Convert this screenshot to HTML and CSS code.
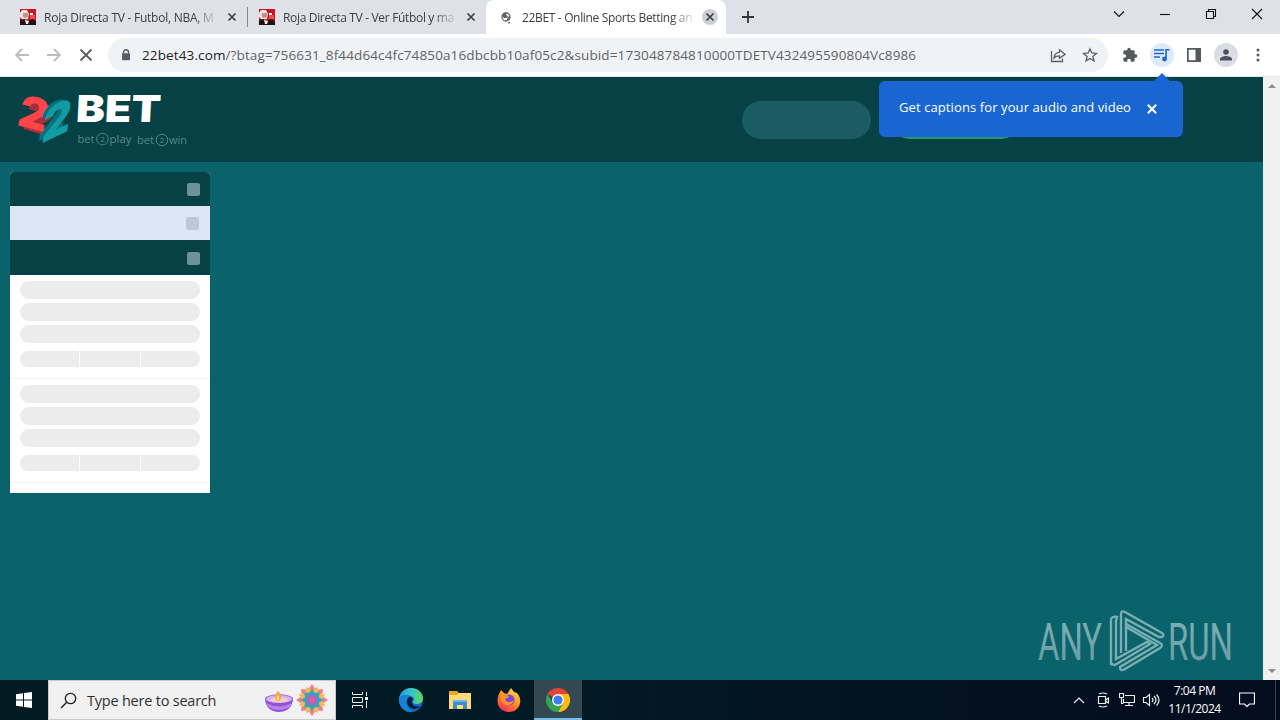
FILE: index.html
```html
<!DOCTYPE html>
<html lang="en">
<head>
    <meta charset="UTF-8">
    <meta name="viewport" content="width=device-width, initial-scale=1.0">
    <title>22BET - Online Sports Betting</title>
    <link rel="stylesheet" href="styles.css">
</head>
<body>
    <svg class="defs" width="0" height="0">
        <symbol id="roja" viewBox="0 0 16 16">
            <path fill="#c91522" d="M0 0h16v16H0z"/>
            <path fill="#eee5e1" d="M0 4l2-3h5l2 4-1 5-5 1-3-3z"/>
            <path fill="#c99083" d="M3 4h5v4l-3 1-2-1z"/>
            <path fill="#211014" d="M0 11l4-1 4 2 4-2 4 2v4H0z"/>
            <path fill="#eee" d="M5 11l4 1-1 3H6zM10 4h3v2h-3z"/>
            <path fill="#f04b4d" d="M10 6h5v4h-5z"/>
        </symbol>
        <symbol id="close" viewBox="0 0 10 10">
            <path d="M1.500 1.500l7 7M8.500 1.500l-7 7" fill="none" stroke="currentColor" stroke-width="1.7"/>
        </symbol>
    </svg>

    <!-- tabs -->
    <div class="tabs">
        <div class="tab">
            <svg class="favicon" width="16" height="16"><use href="#roja"/></svg>
            <span class="tab-title t1">Roja Directa TV - Futbol, NBA, M</span>
            <span class="tab-close"><svg width="10" height="10"><use href="#close"/></svg></span>
        </div>
        <div class="tab">
            <svg class="favicon" width="16" height="16"><use href="#roja"/></svg>
            <span class="tab-title t2">Roja Directa TV - Ver Fútbol y ma</span>
            <span class="tab-close"><svg width="10" height="10"><use href="#close"/></svg></span>
        </div>
        <div class="tab active">
            <svg class="favicon" width="16" height="16" viewBox="0 0 16 16">
                <circle cx="7" cy="8" r="4" fill="#fff" stroke="#5f6368" stroke-width="1.3"/>
                <path fill="#5f6368" d="M3 7c0-3 3-4 5-3L7 6l2 1-1 2H5zM9 8l2-1c0 3-1 4-3 5V10z"/>
                <path fill="#3f76cf" d="M9 13h2v1.6H9z"/>
            </svg>
            <span class="tab-title t3">22BET - Online Sports Betting an</span>
            <span class="tab-close"><svg width="10" height="10"><use href="#close"/></svg></span>
        </div>
        <svg class="new-tab" width="12" height="12"><path d="M6 0v12M0 6h12" stroke="#30343a" stroke-width="1.8"/></svg>
        <div class="window-buttons">
            <svg width="12" height="12" viewBox="0 0 12 12"><path d="M1 3.5l5 5 5-5"/></svg>
            <svg width="12" height="12" viewBox="0 0 12 12"><path d="M1 6.5h10"/></svg>
            <svg width="12" height="12" viewBox="0 0 12 12"><path d="M1.5 3.5h7v7h-7zM3.5 3.500v-2h7v7h-2"/></svg>
            <svg width="12" height="12" viewBox="0 0 12 12"><path d="M1 1l10 10M11 1L1 11"/></svg>
        </div>
    </div>

    <!-- toolbar -->
    <div class="toolbar">
        <div class="nav">
            <svg width="14" height="14" viewBox="0 0 14 14" class="off"><path d="M14 7H1.500M7 1L1 7l6 6"/></svg>
            <svg width="14" height="14" viewBox="0 0 14 14" class="off"><path d="M0 7h12.500M7 1l6 6-6 6"/></svg>
            <svg width="14" height="14" viewBox="0 0 14 14"><path d="M1.500 1.500l11 11M12.500 1.500l-11 11"/></svg>
        </div>
        <div class="address">
            <svg width="10" height="12" viewBox="0 0 10 12"><path d="M2.500 5V3.300a2.500 2.500 0 0 1 5 0V5" fill="none" stroke="#5b5f64" stroke-width="1.400"/><rect x="1" y="4.300" width="8" height="7" rx="1" fill="#5b5f64"/></svg>
            <span class="url"><b>22bet43.com</b>/?btag=756631_8f44d64c4fc74850a16dbcbb10af05c2&amp;subid=173048784810000TDETV432495590804Vc8986</span>
            <svg class="share" width="16" height="16" viewBox="0 0 16 16"><path d="M1.500 4v10.500h11v-3M4 11c.4-4 2.500-5.500 5.500-5.600V2.800L15 7.300l-5.500 4V8.800C7 8.800 5.300 9.500 4 11z"/></svg>
            <svg class="star" width="16" height="16" viewBox="0 0 16 16"><path d="M8 1.800l1.800 4.200 4.600.4-3.500 3 1.100 4.500L8 11.500l-4 2.400 1.100-4.500-3.500-3 4.600-.4z"/></svg>
        </div>
        <div class="actions">
            <svg width="16" height="16" viewBox="0 0 24 24"><path fill="#55595e" d="M20.500 11H19V7a2 2 0 0 0-2-2h-4V3.500a2.500 2.500 0 0 0-5 0V5H4a2 2 0 0 0-2 2v3.800h1.500a2.700 2.700 0 0 1 0 5.400H2V20c0 1.100.9 2 2 2h3.800v-1.500a2.700 2.700 0 0 1 5.400 0V22H17a2 2 0 0 0 2-2v-4h1.500a2.500 2.500 0 0 0 0-5z"/></svg>
            <span class="round media"><svg width="16" height="14" viewBox="0 0 16 14"><path d="M0 2h10M0 5.500h10M0 9h6M12 11V1.800h3.500" fill="none" stroke="#1b6ad6" stroke-width="1.600"/><circle cx="10.500" cy="11" r="2.400" fill="#1b6ad6"/></svg></span>
            <svg width="14" height="14" viewBox="0 0 14 14"><path fill="#55595e" fill-rule="evenodd" d="M0 0h14v14H0zM1.700 1.700v10.600h6.800V1.700z"/></svg>
            <span class="round user"><svg width="14" height="14" viewBox="0 0 14 14"><circle cx="7" cy="4" r="2.800" fill="#4b5065"/><path d="M1 12.500V11c0-2 4-3 6-3s6 1 6 3v1.500z" fill="#4b5065"/></svg></span>
            <svg width="4" height="14" viewBox="0 0 4 14"><circle cx="2" cy="2" r="1.500"/><circle cx="2" cy="7" r="1.500"/><circle cx="2" cy="12" r="1.500"/></svg>
        </div>
    </div>

    <!-- page -->
    <div class="viewport">
        <div class="site">
            <header class="header">
                <svg class="logo" width="180" height="60" viewBox="14 90 180 60">
                    <g class="logo-digit">
                        <text class="red-side" transform="matrix(.95 .3 -.27 .9 21 128)">2</text>
                        <text class="red" transform="matrix(1 .25 -.22 .97 16 125)">2</text>
                        <text class="teal-side" transform="matrix(.95 -.48 -.15 1.050 37 142)">2</text>
                        <text class="teal" transform="matrix(1 -.48 -.15 1.080 40.500 144)">2</text>
                    </g>
                    <text class="logo-name" transform="translate(75.500 122) skewX(-3)" textLength="85" lengthAdjust="spacingAndGlyphs">BET</text>
                    <g class="slogan">
                        <text x="77.500" y="143" textLength="17" lengthAdjust="spacingAndGlyphs">bet</text>
                        <circle cx="102.500" cy="139" r="5.800"/>
                        <text class="small" x="100.300" y="142">2</text>
                        <text x="109.500" y="143" textLength="22" lengthAdjust="spacingAndGlyphs">play</text>
                        <text x="137" y="143.500" textLength="17" lengthAdjust="spacingAndGlyphs">bet</text>
                        <circle cx="162" cy="140" r="5.800"/>
                        <text class="small" x="159.800" y="143">2</text>
                        <text x="169" y="143.500" textLength="18" lengthAdjust="spacingAndGlyphs">win</text>
                    </g>
                </svg>
                <div class="pill login"></div>
                <div class="pill signup"></div>
            </header>
            <aside class="sidebar">
                <div class="bar top"><i></i></div>
                <div class="bar light"><i></i></div>
                <div class="bar last"><i></i></div>
                <div class="coupon">
                    <div class="line"></div><div class="line"></div><div class="line"></div>
                    <div class="odds"><i></i><i></i><i></i></div>
                </div>
                <div class="coupon">
                    <div class="line"></div><div class="line"></div><div class="line"></div>
                    <div class="odds"><i></i><i></i><i></i></div>
                </div>
            </aside>
        </div>
        <div class="scrollbar">
            <svg width="8" height="5"><path d="M0 5l4-4 4 4z"/></svg>
            <svg width="8" height="5"><path d="M0 0l4 4 4-4z"/></svg>
        </div>
    </div>

    <!-- captions tooltip -->
    <div class="tooltip">
        <span>Get captions for your audio and video</span>
        <svg width="12" height="12"><use href="#close"/></svg>
    </div>

    <svg class="watermark" width="196" height="64" viewBox="1037 609 196 64">
        <defs>
            <linearGradient id="fade" x1="0" y1="0" x2="0" y2="1">
                <stop offset="0" stop-color="#81b2b9"/>
                <stop offset="1" stop-color="#6599a1"/>
            </linearGradient>
        </defs>
        <text x="1038" y="659.500" textLength="64" lengthAdjust="spacingAndGlyphs">ANY</text>
        <text x="1168" y="659.500" textLength="65" lengthAdjust="spacingAndGlyphs">RUN</text>
        <g class="play">
            <path d="M1117 617q-6-1-6 3v44l4 1 35-21-3-2-31 17v-38z"/>
            <path d="M1121 653v-39q0-4 4-2l37 21q3 2 0 4h-3l-33-18v32"/>
            <path d="M1126 624l34 19q4 2 0 5l-35 21q-5 3-5-2l37-22-31-18"/>
        </g>
    </svg>

    <!-- taskbar -->
    <div class="taskbar">
        <div class="start"><svg width="16" height="16" viewBox="0 0 16 16"><path fill="#fff" d="M0 2.200l7-1v6.300H0zM8 1l8-1v7.500H8zM0 8.500h7v6.300l-7-1zM8 8.500h8V16l-8-1z"/></svg></div>
        <div class="search">
            <svg width="17" height="17" viewBox="0 0 17 17"><path d="M1 16l5.500-5.500" stroke="#222" stroke-width="1.400"/><circle cx="10.500" cy="6.500" r="5.200" fill="none" stroke="#222" stroke-width="1.300"/></svg>
            <span>Type here to search</span>
            <svg class="lamp" width="64" height="34" viewBox="264 683 64 34">
                <path d="M265 698c0 9 6 14 14 14s14-5 14-14c-6-5-22-5-28 0z" fill="#9254d0"/>
                <ellipse cx="279" cy="699" rx="13" ry="4" fill="#d5b0f2"/>
                <ellipse cx="279" cy="700" rx="9" ry="2.500" fill="#f3cec8"/>
                <path d="M266 703q13 7 26 0l-2 4q-11 6-22 0z" fill="#bb83ed"/>
                <path d="M278 691c-4 5-3 9 0 10 4-1 4-6 0-10z" fill="#f8a529"/>
                <path d="M278 695c-2 3-1 5 0 5s2-2 0-5z" fill="#ffea83"/>
                <g transform="translate(312 700)">
                    <path fill="#f27b8d" d="M0-16l4 6 7-1-1 7 6 4-6 4 1 7-7-1-4 6-4-6-7 1 1-7-6-4 6-4-1-7 7 1z"/>
                    <path fill="#f7b659" transform="rotate(22) scale(.9)" d="M0-16l4 6 7-1-1 7 6 4-6 4 1 7-7-1-4 6-4-6-7 1 1-7-6-4 6-4-1-7 7 1z"/>
                    <path fill="#31a8b8" transform="scale(.7)" d="M0-16l4 6 7-1-1 7 6 4-6 4 1 7-7-1-4 6-4-6-7 1 1-7-6-4 6-4-1-7 7 1z"/>
                    <path fill="#ae62c9" transform="rotate(22) scale(.42)" d="M0-16l4 6 7-1-1 7 6 4-6 4 1 7-7-1-4 6-4-6-7 1 1-7-6-4 6-4-1-7 7 1z"/>
                    <circle r="2.500" fill="#ed5a9a"/>
                </g>
            </svg>
        </div>
        <div class="app"><svg width="16" height="16" viewBox="0 0 16 16"><path d="M.5 0v2.500h10V0M.5 16v-2.500h10V16M.5 5.500h10v5H.5zM14.500 0v4M14.500 9v7" fill="none" stroke="#e8eef0"/><path d="M13 5h3v3h-3z" fill="#fff"/></svg></div>
        <div class="app edge"><svg width="24" height="24" viewBox="0 0 24 24">
            <defs><linearGradient id="edge"><stop stop-color="#279fe7"/><stop offset=".6" stop-color="#37c8bd"/><stop offset="1" stop-color="#66d657"/></linearGradient></defs>
            <circle cx="12" cy="12" r="12" fill="#126cc0"/>
            <path d="M0 11C1 4 6 0 12 0c7 0 12 5 12 10 0 4-3 6-6 6-4 0-5-2-3-4 1-4-9-8-15-1z" fill="url(#edge)"/>
            <path d="M10 9c-4 3-2 11 5 12 3 0 6-2 7-3-3 1-8 1-9-3-1-2 0-3 1-4-1-2-3-2-4-2z" fill="#061d38"/>
            <path d="M0 12c0-5 7-7 10-3-5 4-3 11 4 15C5 25 0 18 0 12z" fill="#1682d8"/>
        </svg></div>
        <div class="app"><svg width="22" height="20" viewBox="0 0 22 20"><path fill="#e9a728" d="M0 1h8l2 2h12v5H0z"/><path fill="#ffdb78" d="M0 5h8l2-2h12v16H0z"/><path fill="#398fce" d="M4 10h14v9h-4v-4H8v4H4z"/><path fill="#63b8e8" d="M4 10h14v2H4z"/></svg></div>
        <div class="app"><svg width="24" height="24" viewBox="0 0 24 24">
            <defs><linearGradient id="fire" x1=".8" y1="0" x2=".2" y2="1"><stop stop-color="#ffe63c"/><stop offset=".5" stop-color="#ff8c22"/><stop offset="1" stop-color="#f4245c"/></linearGradient></defs>
            <path fill="url(#fire)" d="M2 6l2-4 3 3 3 1 4-6 3 4 3 1c7 8 2 19-8 19S-2 15 2 6z"/>
            <circle cx="12" cy="12" r="5.500" fill="#7b48d6"/><path fill="#ff9325" d="M5 7c3-2 6 0 7 2l-4 2c1 4 6 4 9 1-1 5-7 7-11 3-2-2-2-5-1-8z"/>
        </svg></div>
        <div class="app current"><svg width="24" height="24" viewBox="0 0 24 24">
            <path fill="#e54335" d="M12 12L1.600 6a12 12 0 0 1 20.800 0z"/><path fill="#fbbd05" d="M12 6h10.400A12 12 0 0 1 12 24l5-9z"/><path fill="#30a552" d="M1.600 6A12 12 0 0 0 12 24l5.200-9L12 17l-5.200-2z"/>
            <circle cx="12" cy="12" r="6" fill="#fff"/><circle cx="12" cy="12" r="4.600" fill="#3b7ded"/>
        </svg></div>
        <div class="tray">
            <svg width="12" height="8" viewBox="0 0 12 8"><path d="M1 7l5-5 5 5"/></svg>
            <svg width="12" height="16" viewBox="0 0 12 16"><path d="M2 2q4-2 8 0M2 14q4 2 8 0M1.500 4.500h7v7h-7zM8.500 8l3-2v5l-3-2"/></svg>
            <svg width="16" height="14" viewBox="0 0 16 14"><path d="M6 2.500h9.500v7H4.500V6M10 9.500v3M6 12.500h8M.5.500h4v4h-4zM2.500 4.500v6h2"/></svg>
            <svg width="17" height="14" viewBox="0 0 17 14"><path d="M.5 4.500H3l3.500-3v11l-3.500-3H.5zM9 5q2 2 0 4M11 3q4 4 0 8M13.500 1.500q5 5.500 0 11"/></svg>
        </div>
        <div class="clock"><span>7:04 PM</span><span>11/1/2024</span></div>
        <svg class="notify" width="16" height="16" viewBox="0 0 16 16"><path d="M.5 1h15v11h-5L8 14.500 5.500 12h-5z" fill="none" stroke="#fff" stroke-width="1.200"/></svg>
        <div class="desktop-edge"></div>
    </div>
</body>
</html>
```
FILE: styles.css
```css
* {
    box-sizing: border-box;
}
body {
    margin: 0;
    width: 1280px;
    height: 720px;
    overflow: hidden;
    font-family: "Open Sans", "Noto Sans", sans-serif;
    display: flex;
    flex-direction: column;
    position: relative;
}
svg {
    display: block;
    flex: none;
}
.defs {
    position: absolute;
}

/* tabs */
.tabs {
    height: 34px;
    flex: none;
    background: #dee1e8;
    display: flex;
    padding-left: 9px;
}
.tab {
    width: 239px;
    height: 34px;
    display: flex;
    align-items: center;
    padding: 0 8px 0 11px;
    color: #3c4043;
}
.tab:first-child {
    background: linear-gradient(#85898f, #85898f) right 0 top 7px / 1px 20px no-repeat;
}
.tab.active {
    background: #fff;
    border-radius: 8px 8px 0 0;
    width: 240px;
    margin-left: -1px;
}
.active .favicon {
    margin-left: 2px;
}
.tab-title {
    width: 174px;
    margin-left: 8px;
    font-size: 12px;
    white-space: nowrap;
    -webkit-mask-image: linear-gradient(90deg, #000 86%, transparent 100%);
    mask-image: linear-gradient(90deg, #000 86%, transparent 100%);
}
.t1 {
    letter-spacing: -0.25px;
}
.t2 {
    letter-spacing: -0.33px;
}
.t3 {
    letter-spacing: -0.34px;
}
.active .tab-title {
    margin-left: 7px;
}
.tab-close {
    width: 16px;
    height: 16px;
    margin-left: auto;
    border-radius: 50%;
    display: flex;
    align-items: center;
    justify-content: center;
    flex: none;
}
.active .tab-close {
    background: #d0d1d4;
}
.new-tab {
    margin: 11px 0 0 16px;
}
.window-buttons {
    display: flex;
    gap: 34px;
    margin: 8px 17px 0 auto;
}
.window-buttons svg {
    fill: none;
    stroke: #111;
    stroke-width: 1.1;
}

/* toolbar */
.toolbar {
    height: 43px;
    flex: none;
    background: #fff;
    border-bottom: 1px solid #dce8ec;
    display: flex;
    align-items: center;
}
.nav {
    width: 108px;
    padding-left: 15px;
    display: flex;
    gap: 18px;
}
.nav svg {
    fill: none;
    stroke: #5b5f64;
    stroke-width: 1.8;
}
.nav .off {
    stroke: #babcbe;
}
.address {
    width: 1000px;
    height: 34px;
    border-radius: 17px;
    background: #f0f3f5;
    display: flex;
    align-items: center;
    padding: 0 10px 0 13px;
}
.url {
    margin-left: 11px;
    font-size: 13.5px;
    letter-spacing: 0.122px;
    color: #5f6368;
    white-space: nowrap;
}
.url b {
    font-weight: normal;
    color: #202124;
}
.share {
    margin-left: auto;
}
.star {
    margin-left: 16px;
}
.share, .star {
    fill: none;
    stroke: #5b5f64;
    stroke-width: 1.3;
}
.actions {
    display: flex;
    align-items: center;
    margin-left: 14px;
}
.actions > svg:nth-child(3) {
    margin: 0 14px 0 13px;
}
.actions > svg:last-child {
    margin-left: 18px;
    fill: #55595e;
}
.round {
    width: 24px;
    height: 24px;
    border-radius: 50%;
    display: flex;
    align-items: center;
    justify-content: center;
}
.media {
    background: #dceafa;
    margin-left: 12px;
}
.user {
    background: #dbdde4;
    margin-left: -1px;
}

/* page */
.viewport {
    height: 603px;
    flex: none;
    display: flex;
}
.site {
    width: 1263px;
    background: #0a636a;
}
.header {
    height: 85px;
    background: #064145;
    display: flex;
    align-items: flex-start;
    padding: 13px 0 0 14px;
}
.logo-digit {
    font: 900 44px Inter, sans-serif;
}
.red { fill: #ff4549; }
.red-side { fill: #a72d38; }
.teal { fill: #119ba2; }
.teal-side { fill: #087179; }
.logo-name {
    font: 900 37px Inter, sans-serif;
    fill: #fff;
}
.slogan text {
    font-size: 11.500px;
    fill: #5a858a;
}
.slogan .small {
    font-size: 8px;
}
.slogan circle {
    fill: none;
    stroke: #5a858a;
}
.pill {
    width: 129px;
    height: 38px;
    border-radius: 19px;
    margin-top: 11px;
}
.login {
    background: #1b5c62;
    margin-left: 548px;
}
.signup {
    background: #2b9868;
    margin-left: 20px;
}
.sidebar {
    width: 200px;
    height: 321px;
    margin: 10px 0 0 10px;
    background: #fff;
    border-radius: 4px 4px 0 0;
    overflow: hidden;
}
.bar {
    height: 34px;
    background: #064145;
    display: flex;
    align-items: center;
    justify-content: flex-end;
    padding-right: 10px;
}
.bar i {
    width: 13px;
    height: 13px;
    border-radius: 2px;
    background: #6d929b;
}
.bar.last {
    height: 35px;
    padding-top: 2px;
}
.bar.light {
    background: #dae6f4;
    padding-right: 11px;
}
.bar.light i {
    background: #bcc8d8;
}
.coupon {
    height: 104px;
    padding: 6px 10px 0;
    border-bottom: 1px solid #f1f3f3;
}
.line {
    height: 18px;
    border-radius: 9px;
    background: #ececec;
    margin-bottom: 4px;
}
.odds {
    display: flex;
    gap: 1px;
    margin-top: 8px;
    height: 16px;
    border-radius: 8px;
    overflow: hidden;
}
.odds i {
    flex: 1;
    background: #ececec;
}
.scrollbar {
    width: 17px;
    background: #f1f1f1;
    display: flex;
    flex-direction: column;
    align-items: center;
    justify-content: space-between;
    padding: 6px 0;
    fill: #8c8c8c;
}

/* tooltip */
.tooltip {
    position: absolute;
    left: 879px;
    top: 81px;
    width: 304px;
    height: 56px;
    border-radius: 6px;
    background: #1966d2;
    color: #fff;
    font-size: 13px;
    letter-spacing: 0.1px;
    display: flex;
    align-items: center;
    padding: 0 25px 4px 20px;
}
.tooltip::before {
    content: "";
    position: absolute;
    left: 275px;
    top: -8px;
    border: 8px solid transparent;
    border-top: 0;
    border-bottom-color: #1966d2;
}
.tooltip svg {
    margin: 4px 0 0 auto;
}
.tooltip span {
    white-space: nowrap;
}

/* watermark */
.watermark {
    position: absolute;
    left: 1037px;
    top: 609px;
}
.watermark text {
    font: 400 52px Roboto, sans-serif;
    fill: url(#fade);
}
.play path {
    fill: none;
    stroke: #7badb4;
    stroke-width: 2.4;
}

/* taskbar */
.taskbar {
    height: 40px;
    flex: none;
    background: linear-gradient(90deg, #021b23, #021a24 45%, #03101f 80%, #020d1d);
    display: flex;
    align-items: center;
    color: #fff;
}
.start {
    width: 48px;
    padding-left: 16px;
}
.search {
    width: 288px;
    height: 40px;
    background: #f1f1f1;
    border: 1px solid #c9cccd;
    display: flex;
    align-items: center;
    padding-left: 11px;
    color: #303030;
    font-size: 14.5px;
    letter-spacing: -0.22px;
}
.search span {
    margin-left: 10px;
    white-space: nowrap;
}
.lamp {
    margin: 0 7px 0 auto;
}
.app {
    width: 48px;
    height: 40px;
    display: flex;
    align-items: center;
    justify-content: center;
    margin-right: 1px;
}
.app.edge {
    margin-left: 2px;
}
.app.current {
    background: #344851;
    border-bottom: 2px solid #76b9ed;
    padding-top: 2px;
}
.tray {
    display: flex;
    align-items: center;
    gap: 12px;
    margin-left: auto;
    fill: none;
    stroke: #e9eff5;
    stroke-width: 1.2;
}
.tray svg + svg + svg {
    margin-left: -2px;
}
.tray svg:last-child {
    margin-left: -4px;
}
.clock {
    width: 53px;
    margin-left: 8px;
    display: flex;
    flex-direction: column;
    align-items: center;
    font-size: 12px;
    line-height: 18px;
    letter-spacing: -0.5px;
}
.notify {
    margin-left: 18px;
}
.desktop-edge {
    width: 1px;
    height: 40px;
    background: #37414d;
    margin: 0 4px 0 20px;
}
```
